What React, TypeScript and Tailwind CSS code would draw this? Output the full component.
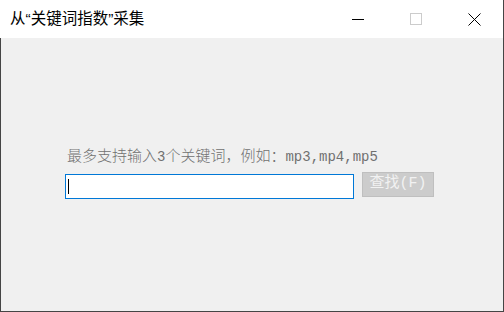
import React from "react";

const mono = '"Liberation Mono", "Noto Sans CJK SC", monospace';

export default function App() {
  return (
    <div className="w-[504px] h-[312px] flex flex-col bg-[#f0f0f0] border-r border-b border-[#454545] overflow-hidden">
      {/* title bar */}
      <div className="h-[38px] bg-white flex items-center shrink-0">
        <div
          className="pl-[10px] text-[15.5px] text-black flex-1"
          style={{ fontFamily: '"Liberation Sans", "Noto Sans CJK SC", sans-serif' }}
        >
          从“关键词指数”采集
        </div>
        <div className="flex h-full">
          <div className="w-[58px] h-full flex items-center justify-center">
            <svg width="12" height="12" viewBox="0 0 12 12">
              <line x1="0" y1="6.5" x2="12" y2="6.5" stroke="#000" strokeWidth="1" />
            </svg>
          </div>
          <div className="w-[58px] h-full flex items-center justify-center">
            <svg width="12" height="12" viewBox="0 0 12 12">
              <rect x="0.5" y="0.5" width="11" height="11" fill="none" stroke="#cccccc" strokeWidth="1" />
            </svg>
          </div>
          <div className="w-[58px] h-full flex items-center justify-center">
            <svg width="13" height="13" viewBox="0 0 13 13">
              <path d="M0.5 0.5L12.5 12.5M12.5 0.5L0.5 12.5" stroke="#000" strokeWidth="1" />
            </svg>
          </div>
        </div>
      </div>

      {/* body */}
      <div className="flex-1 border-l border-[#454545] pl-[64px] pt-[109px]">
        <div
          className="text-[15px] leading-[20px] text-[#707070] font-light pl-[2px]"
          style={{ fontFamily: mono }}
        >
          最多支持输入<span className="text-[14px]">3</span>个关键词，例如：
          <span className="text-[14px] font-normal">mp3,mp4,mp5</span>
        </div>
        <div className="mt-[4px] flex items-start">
          <div className="mt-[2px] w-[289px] h-[25px] bg-white border border-[color:#0078d7] flex items-center pl-[2px]">
            <span className="w-px h-[15px] bg-black" />
          </div>
          <div
            className="ml-[8px] w-[72px] h-[25px] bg-[#cccccc] border border-[#bfbfbf] flex items-center justify-center text-[15px] text-[#f2f2f2]"
            style={{ fontFamily: mono }}
          >
            查找(F)
          </div>
        </div>
      </div>
    </div>
  );
}
